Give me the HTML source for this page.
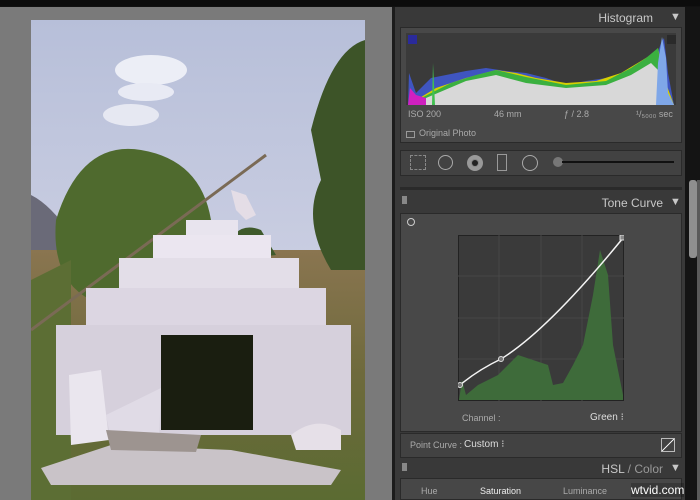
<!DOCTYPE html>
<html><head><style>
*{margin:0;padding:0;box-sizing:border-box}
body{width:700px;height:500px;overflow:hidden;background:#111;position:relative;font-family:"Liberation Sans",sans-serif;}
.a{position:absolute}
.t{position:absolute;color:#c8c8c8;font-size:11px;white-space:nowrap}
</style></head><body>
<div class="a" style="left:0;top:0;width:700px;height:6px;background:#0c0c0c"></div>
<div class="a" style="left:0;top:7px;width:392px;height:493px;background:#7a7a7a"></div>
<svg class="a" style="left:31px;top:20px" width="334" height="480" viewBox="0 0 334 480">
<defs><linearGradient id="sky" x1="0" y1="0" x2="0" y2="1"><stop offset="0" stop-color="#b7bfd9"/><stop offset="1" stop-color="#dcdcea"/></linearGradient>
<linearGradient id="gr" x1="0" y1="0" x2="0" y2="1"><stop offset="0" stop-color="#8a7550"/><stop offset="0.5" stop-color="#6e6a3c"/><stop offset="1" stop-color="#5b6b32"/></linearGradient></defs>
<rect width="334" height="480" fill="url(#sky)"/>
<ellipse cx="120" cy="50" rx="36" ry="15" fill="#eceef6"/><ellipse cx="115" cy="72" rx="28" ry="9" fill="#e8eaf4"/><ellipse cx="100" cy="95" rx="28" ry="11" fill="#e6e8f2"/>
<path d="M0 175 Q20 185 40 215 L40 260 L0 260Z" fill="#6a6a78"/>
<rect y="230" width="334" height="250" fill="url(#gr)"/>
<path d="M25 200 Q50 120 110 130 Q170 140 180 200 Q190 250 150 280 L60 280 Q20 260 25 200Z" fill="#4f6a2e"/>
<path d="M280 110 Q300 30 334 20 L334 250 L300 250 Q270 200 290 160Z" fill="#3d5428"/>
<path d="M195 230 Q205 200 230 210 L245 235 L200 240Z" fill="#3f5a2b"/>
<path d="M0 260 L40 240 L40 480 L0 480Z" fill="#5c6e34"/>
<path d="M0 310 L235 135" stroke="#7a6a55" stroke-width="3"/>
<path d="M200 170 L215 175 L225 195 L215 200 L205 190Z" fill="#e4dde6"/>
<rect x="155" y="200" width="52" height="16" fill="#e8e4ee"/>
<rect x="122" y="215" width="118" height="23" fill="#ebe6f0"/>
<rect x="88" y="238" width="180" height="32" fill="#e3dee8"/>
<rect x="55" y="268" width="240" height="40" fill="#dcd6e2"/>
<rect x="25" y="305" width="295" height="110" fill="#d6d0dc"/>
<rect x="130" y="315" width="92" height="95" fill="#1a1e10"/>
<path d="M38 355 L70 350 L78 420 L40 425Z" fill="#eae6ee"/>
<path d="M75 395 L130 368 L128 420 L82 430Z" fill="#e0dbe6"/>
<path d="M260 415 Q285 395 310 410 L310 430 L265 430Z" fill="#e6e0e8"/>
<path d="M10 448 L80 425 L200 430 L310 450 L300 465 L20 465Z" fill="#c9c3c8"/>
<path d="M75 410 L170 415 L165 432 L80 430Z" fill="#9d9490"/>
</svg>
<div class="a" style="left:392px;top:7px;width:3px;height:493px;background:#1c1c1c"></div>
<div class="a" style="left:395px;top:7px;width:290px;height:493px;background:#393939"></div>
<div class="a" style="left:685px;top:7px;width:15px;height:493px;background:#141414"></div>
<div class="a" style="left:689px;top:180px;width:8px;height:78px;background:#8f8f8f;border-radius:3px"></div>
<div class="a" style="left:697px;top:180px;width:3px;height:320px;background:#5a5a5a"></div>
<div class="t" style="right:47px;top:11px;font-size:12px">Histogram</div>
<div class="t" style="left:670px;top:11px;font-size:11px">▼</div>
<div class="a" style="left:400px;top:27px;width:282px;height:116px;background:#484848;border:1px solid #2a2a2a"></div>
<div class="a" style="left:406px;top:33px;width:270px;height:72px;background:#3a3a3a"></div>
<svg class="a" style="left:406px;top:33px" width="270" height="72" viewBox="0 0 270 72">
<path d="M2 72 L3 40 L10 60 L20 50 L25 45 L40 42 L60 38 L80 35 L100 38 L120 40 L140 45 L160 52 L180 48 L200 45 L220 40 L240 30 L250 25 L255 10 L258 5 L262 40 L268 72Z" fill="#3f55c0"/>
<path d="M2 72 L30 55 L60 45 L90 37 L110 40 L130 45 L160 50 L190 48 L215 40 L235 28 L248 20 L252 15 L258 45 L268 72Z" fill="#d7d000"/>
<path d="M2 72 L25 60 L45 50 L70 42 L90 37 L120 44 L160 52 L200 48 L225 35 L240 25 L252 15 L260 60 L268 72Z" fill="#3bb040"/>
<path d="M2 72 L20 65 L60 48 L90 42 L120 50 L160 55 L200 52 L225 42 L245 30 L255 40 L262 62 L268 72Z" fill="#d8d8d8"/>
<path d="M250 72 L252 30 L256 4 L260 25 L262 60 L268 72Z" fill="#7fa7e8"/>
<path d="M2 72 L4 55 L10 62 L20 65 L20 72Z" fill="#d020c0"/>
<path d="M26 72 L27 30 L29 72Z" fill="#40c050"/>
<rect x="2" y="2" width="9" height="9" fill="#2a2a9a"/><rect x="261" y="2" width="9" height="9" fill="#2a2a2a"/>
</svg>
<div class="t" style="left:408px;top:109px;font-size:9px;color:#aaa">ISO 200</div>
<div class="t" style="left:494px;top:109px;font-size:9px;color:#aaa">46 mm</div>
<div class="t" style="left:564px;top:109px;font-size:9px;color:#aaa">ƒ / 2.8</div>
<div class="t" style="left:636px;top:109px;font-size:9px;color:#aaa">¹/₅₀₀₀ sec</div>
<div class="a" style="left:406px;top:131px;width:9px;height:7px;border:1px solid #999"></div>
<div class="t" style="left:419px;top:128px;font-size:9px;color:#aaa">Original Photo</div>
<div class="a" style="left:400px;top:150px;width:282px;height:26px;background:#424242;border:1px solid #2a2a2a"></div>
<div class="a" style="left:410px;top:155px;width:16px;height:15px;border:1px dashed #888"></div>
<div class="a" style="left:438px;top:155px;width:15px;height:15px;border:1px solid #aaa;border-radius:50%"></div>
<div class="a" style="left:467px;top:155px;width:16px;height:16px;background:#888;border-radius:50%;border:4px solid #999"><div style="width:6px;height:6px;margin:1px;background:#222;border-radius:50%"></div></div>
<div class="a" style="left:497px;top:154px;width:10px;height:17px;border:1px solid #999"></div>
<div class="a" style="left:522px;top:155px;width:16px;height:16px;border:1px solid #aaa;border-radius:50%"></div>
<div class="a" style="left:553px;top:157px;width:10px;height:10px;background:#777;border-radius:50%"></div>
<div class="a" style="left:562px;top:161px;width:112px;height:2px;background:#111"></div>
<div class="a" style="left:400px;top:187px;width:282px;height:3px;background:#2a2a2a"></div>
<div class="a" style="left:402px;top:196px;width:5px;height:8px;background:#888"></div>
<div class="t" style="right:37px;top:196px;font-size:12px">Tone Curve</div>
<div class="t" style="left:670px;top:196px">▼</div>
<div class="a" style="left:400px;top:213px;width:282px;height:219px;background:#484848;border:1px solid #2a2a2a"></div>
<div class="a" style="left:407px;top:218px;width:8px;height:8px;border:1px solid #ccc;border-radius:50%"></div>
<svg class="a" style="left:458px;top:235px" width="166" height="166" viewBox="0 0 166 166">
<rect x="0.5" y="0.5" width="165" height="165" fill="#3a3a3a" stroke="#222"/>
<path d="M41 0V166M83 0V166M124 0V166M0 41H166M0 83H166M0 124H166" stroke="#474747"/>
<path d="M1 165 L4 145 L8 160 L20 150 L40 140 L60 120 L75 125 L90 130 L95 150 L105 148 L115 130 L125 110 L135 60 L142 15 L150 40 L155 110 L165 160 L165 165Z" fill="#3e6b3a"/>
<path d="M2 150 Q20 135 43 124 Q90 95 165 3" stroke="#f4f4f4" stroke-width="1.5" fill="none"/>
<circle cx="2" cy="150" r="2.5" fill="#777" stroke="#ddd"/><circle cx="43" cy="124" r="2.5" fill="#777" stroke="#ddd"/><rect x="162" y="0" width="5" height="5" fill="#888" stroke="#ddd"/>
</svg>
<div class="t" style="left:462px;top:413px;font-size:9px;color:#aaa">Channel :</div>
<div class="t" style="left:590px;top:412px;font-size:10px;color:#ddd">Green ⁝</div>
<div class="a" style="left:400px;top:433px;width:282px;height:25px;background:#424242;border:1px solid #2a2a2a"></div>
<div class="t" style="left:410px;top:440px;font-size:9px;color:#aaa">Point Curve :</div>
<div class="t" style="left:464px;top:439px;font-size:10px;color:#ddd">Custom ⁝</div>
<div class="a" style="left:661px;top:438px;width:14px;height:14px;border:1px solid #bbb;background:linear-gradient(135deg,transparent 46%,#eee 46%,#eee 54%,transparent 54%)"></div>
<div class="a" style="left:402px;top:463px;width:5px;height:8px;background:#888"></div>
<div class="t" style="right:37px;top:462px;font-size:12px">HSL <span style="color:#999">/ Color</span></div>
<div class="t" style="left:670px;top:462px">▼</div>
<div class="a" style="left:400px;top:478px;width:282px;height:22px;background:#474747;border:1px solid #2a2a2a"></div>
<div class="t" style="left:421px;top:486px;font-size:9px;color:#aaa">Hue</div>
<div class="t" style="left:480px;top:486px;font-size:9px;color:#eee">Saturation</div>
<div class="t" style="left:563px;top:486px;font-size:9px;color:#aaa">Luminance</div>
<div class="t" style="left:631px;top:483px;font-size:12px;color:#fff;background:rgba(0,0,0,.2)">wtvid.com</div>
</body></html>
